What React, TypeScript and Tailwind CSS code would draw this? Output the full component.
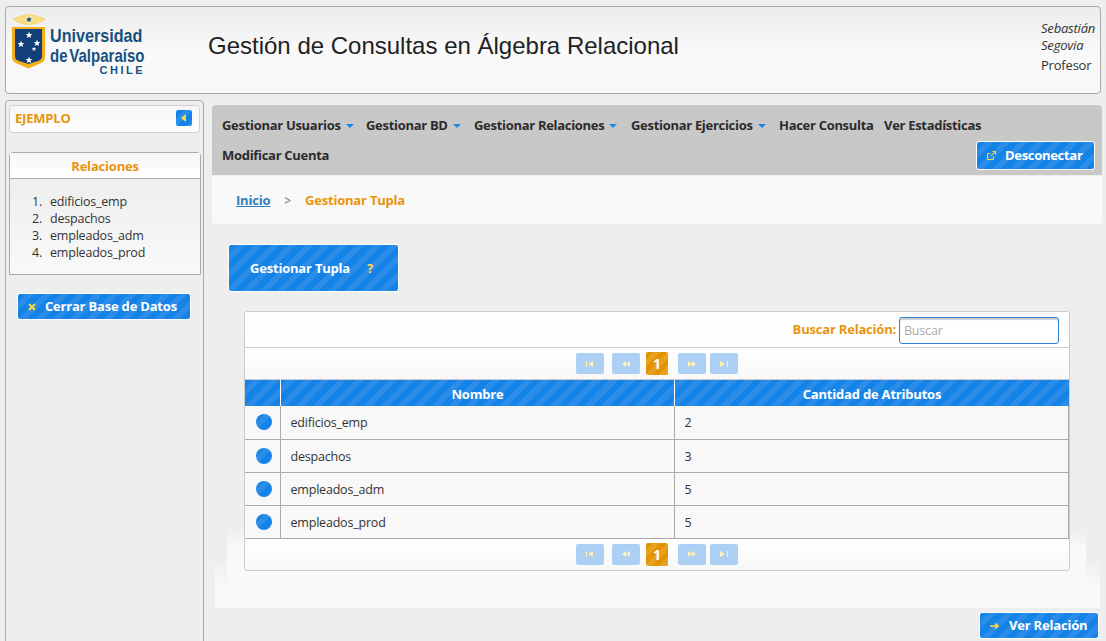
import type { ReactNode } from 'react';

const stripes = 'bg-[repeating-linear-gradient(135deg,#1483e8_0_6px,#2c8de8_6px_12px)]';
const orange = 'text-[#e8940c]';

const relations = [
    { name: 'edificios_emp', attrs: 2 },
    { name: 'despachos', attrs: 3 },
    { name: 'empleados_adm', attrs: 5 },
    { name: 'empleados_prod', attrs: 5 },
];

const Star = ({ x, y, s = 1 }: { x: number; y: number; s?: number }) => (
    <path
        transform={`translate(${x} ${y}) scale(${s})`}
        d="M0-3.4l.9 2.3 2.5.1-1.9 1.6.6 2.4L0 1.7l-2.1 1.3.6-2.4-1.9-1.6 2.5-.1z"
        fill="#ffffff"
    />
);

const Logo = () => (
    <div className="flex items-start">
        <svg width="34" height="56" viewBox="0 0 34 56" className="mt-[7px] shrink-0">
            <path d="M0 5.5 C6 2 11 .5 17 0 C23 .5 28 2 34 5.5 C28 9 23 10.5 17 11 C11 10.5 6 9 0 5.5Z" fill="#f6d774" />
            <g stroke="#fbeebb" strokeWidth=".6">
                <path d="M3 5.5 H11 M6 3 L12 4 M6 8 L12 7 M31 5.5 H23 M28 3 L22 4 M28 8 L22 7" />
            </g>
            <circle cx="17" cy="5.5" r="4.5" fill="#f9e6a4" />
            <path d="M17 2.4l.9 2 2.2.1-1.7 1.4.6 2.2-2-1.2-2 1.2.6-2.2-1.7-1.4 2.2-.1z" fill="#1f4a80" />
            <path d="M0 13 H33 V43 Q33 48 28 49.500 L16.500 54.500 L5 49.500 Q0 48 0 43Z" fill="#f3ae1a" />
            <path d="M3 15 H30 V42 Q30 46 26 47 L16.500 50 L7 47 Q3 46 3 42Z" fill="#123f78" />
            <Star x={17} y={21} />
            <Star x={9} y={30} />
            <Star x={25} y={29} />
            <Star x={22} y={35} s={0.65} />
            <Star x={17} y={46} />
        </svg>
        <div className="ml-[4px] mt-[19px] w-[93px] text-[#17507f] font-['Liberation_Sans',sans-serif] font-bold tracking-normal">
            <div className="text-[19px] leading-[20px] whitespace-nowrap origin-left scale-x-[0.85]">Universidad</div>
            <div className="text-[19px] leading-[20px] whitespace-nowrap origin-left scale-x-[0.79] [word-spacing:-3px]">de Valparaíso</div>
            <div className="text-[11px] leading-[9px] tracking-[2.5px] text-right mr-[-2px]">CHILE</div>
        </div>
    </div>
);

const Header = () => (
    <header className="mx-[5px] mt-[6px] h-[88px] flex border border-[#a9a9a9] rounded-[4px] bg-gradient-to-b from-[#ececec] via-[#f9f9f9] via-50% to-[#f8f8f8] pl-[6px] pr-[18px]">
        <Logo />
        <h1 className="ml-[65px] mt-[24px] text-[24px] leading-[30px] tracking-normal text-[#222] font-['Liberation_Sans',sans-serif]">
            Gestión de Consultas en Álgebra Relacional
        </h1>
        <div className="ml-auto mt-[13px] w-[41px] text-[13px] text-[#333]">
            <div className="italic leading-[17px] whitespace-nowrap">Sebastián</div>
            <div className="italic leading-[17px] whitespace-nowrap">Segovia</div>
            <div className="mt-[3px] leading-[17px] whitespace-nowrap">Profesor</div>
        </div>
    </header>
);

const BlueButton = ({ icon, label, className }: { icon: ReactNode; label: string; className: string }) => (
    <button className={`${stripes} ${className} flex items-center border border-white rounded-[3px] text-white font-bold text-[13px] whitespace-nowrap`}>
        {icon}
        {label}
    </button>
);

const Sidebar = () => (
    <aside className="w-[199px] h-[560px] shrink-0 border border-[#a9a9a9] rounded-t-[4px] bg-[#eeeeee] px-[3px] pt-[4px]">
        <div className="h-[28px] flex items-center justify-between pl-[5px] pr-[7px] border border-[#d2d2d2] rounded-[4px] bg-gradient-to-b from-[#f6f6f6] to-white">
            <span className={`${orange} font-bold text-[13px]`}>EJEMPLO</span>
            <span className={`${stripes} mb-[3px] w-[16px] h-[16px] rounded-[2px] flex items-center justify-center`}>
                <svg width="6" height="8" viewBox="0 0 6 8"><path d="M5 0 V8 L0 4Z" fill="#ffd93b" /></svg>
            </span>
        </div>

        <section className="mt-[19px] w-[192px] border border-[#aaaaaa] rounded-t-[4px]">
            <div className={`${orange} h-[26px] border-b border-[#aaaaaa] bg-gradient-to-b from-[#f6f6f6] to-white text-center font-bold text-[13px] leading-[26px]`}>
                Relaciones
            </div>
            <ol className="h-[95px] pt-[14px] bg-gradient-to-b from-[#eeeeee] to-[#f9f9f9] text-[12.5px] leading-[17px] text-[#333]">
                {relations.map((r, i) => (
                    <li key={r.name} className="flex">
                        <span className="w-[32px] text-right">{i + 1}.</span>
                        <span className="ml-[8px]">{r.name}</span>
                    </li>
                ))}
            </ol>
        </section>

        <BlueButton
            className="mt-[18px] ml-[8px] w-[174px] h-[27px] pl-[10px]"
            icon={
                <svg width="8" height="8" viewBox="0 0 8 8" className="mr-[9px]">
                    <path d="M1 1 L7 7 M7 1 L1 7" stroke="#ffd93b" strokeWidth="2" />
                </svg>
            }
            label="Cerrar Base de Datos"
        />
    </aside>
);

const Caret = () => (
    <svg width="8" height="4" viewBox="0 0 8 4" className="ml-[5px] mt-[1px]"><path d="M0 0 H8 L4 4Z" fill="#1a87e8" /></svg>
);

const MenuItem = ({ label, caret, className }: { label: string; caret?: boolean; className: string }) => (
    <span className={`${className} flex items-center whitespace-nowrap`}>
        {label}
        {caret && <Caret />}
    </span>
);

const Menu = () => (
    <nav className="h-[70px] rounded-t-[4px] bg-[#c8c8c8] pl-[10px] pr-[7px] text-[13px] tracking-[-0.3px] font-bold text-[#2b2b2b]">
        <div className="h-[40px] flex items-center pt-[1px]">
            <MenuItem label="Gestionar Usuarios" caret className="w-[144px]" />
            <MenuItem label="Gestionar BD" caret className="w-[108px]" />
            <MenuItem label="Gestionar Relaciones" caret className="w-[157px]" />
            <MenuItem label="Gestionar Ejercicios" caret className="w-[148px]" />
            <MenuItem label="Hacer Consulta" className="w-[105px]" />
            <MenuItem label="Ver Estadísticas" className="" />
        </div>
        <div className="h-[30px] flex items-start justify-between">
            <MenuItem label="Modificar Cuenta" className="h-[21px]" />
            <BlueButton
                className="mt-[-4px] w-[119px] h-[29px] pl-[10px]"
                icon={
                    <svg width="9" height="9" viewBox="0 0 9 9" className="mr-[9px]" fill="none" stroke="#ffd93b">
                        <path d="M6.500 5.500 V8.500 H.5 V2.500 H3.500 M4 5 L8.500 .5 M5.500 .5 H8.500 V3.500" />
                    </svg>
                }
                label="Desconectar"
            />
        </div>
    </nav>
);

const PagerIcon = ({ d }: { d: string }) => (
    <svg width="10" height="6" viewBox="0 0 10 6"><path d={d} fill="#fdf0b8" /></svg>
);

const Pager = ({ className }: { className: string }) => {
    const btn = 'w-[28px] h-[21px] rounded-[2px] bg-[#abd0f3] flex items-center justify-center';
    return (
        <div className={`${className} flex items-center justify-center bg-gradient-to-b from-white to-[#f8f8f8]`}>
            <span className={btn}><PagerIcon d="M1 0h1v6H1zM8 0v6L3 3z" /></span>
            <span className={`${btn} ml-[8px]`}><PagerIcon d="M5 0v6L1 3zM9 0v6L5 3z" /></span>
            <span className="ml-[6px] w-[22px] h-[23px] rounded-[2px] bg-[repeating-linear-gradient(135deg,#e39300_0_5px,#e8a020_5px_10px)] flex items-center justify-center text-white font-bold text-[14px]">1</span>
            <span className={`${btn} ml-[10px]`}><PagerIcon d="M1 0v6l4-3zM5 0v6l4-3z" /></span>
            <span className={`${btn} ml-[4px]`}><PagerIcon d="M1 0v6l5-3zM8 0h1v6H8z" /></span>
        </div>
    );
};

const RelationsTable = () => (
    <div className="relative ml-[32px] w-[826px] h-[260px] border border-[#cccccc] rounded-[3px] bg-[#f8f8f8]">
        <div className="h-[36px] pt-[1px] flex items-center justify-end pr-[10px] bg-gradient-to-b from-[#fdfdfd] to-white border-b border-[#cccccc]">
            <label className={`${orange} font-bold text-[13px] mr-[3px]`}>Buscar Relación:</label>
            <input
                placeholder="Buscar"
                className="w-[160px] h-[27px] px-[4px] bg-white border border-[#2c83d8] rounded-[3px] shadow-[inset_0_2px_1px_#cccccc] text-[12.5px] placeholder:text-[#aaaaaa] outline-none"
            />
        </div>
        <Pager className="h-[32px] border-b border-[#cccccc]" />
        <table className="w-full table-fixed border-collapse text-[12.5px] text-[#333]">
            <thead>
                <tr className={`${stripes} h-[26px] text-white text-[13px] font-bold`}>
                    <th className="w-[35px] border-r border-white" />
                    <th className="w-[394px] pt-[3px] pl-[1px] border-r border-white">Nombre</th>
                    <th className="pt-[3px] pl-[1px]">Cantidad de Atributos</th>
                </tr>
            </thead>
            <tbody>
                {relations.map(r => (
                    <tr key={r.name} className="h-[33px] border-b border-[#aaaaaa]">
                        <td className="border-r border-[#aaaaaa]">
                            <span className={`${stripes} block w-[16px] h-[16px] rounded-full ml-[11px]`} />
                        </td>
                        <td className="pl-[10px] pt-[3px] border-r border-[#aaaaaa]">{r.name}</td>
                        <td className="pl-[10px] pt-[3px] border-r border-[#aaaaaa]">{r.attrs}</td>
                    </tr>
                ))}
            </tbody>
        </table>
        <Pager className="h-[30px] pt-[1px] rounded-b-[3px]" />
    </div>
);

const Main = () => (
    <main className="relative w-[890px] shrink-0">
        <div className="relative">
            <Menu />
            <div className="mt-[1px] h-[48px] flex items-center pl-[24px] pt-[2px] rounded-b-[4px] bg-[#f9f9f9] text-[13px] font-bold">
                <a className="text-[#2f80b8] underline">Inicio</a>
                <span className="ml-[14px] text-[#666] font-normal text-[12px]">&gt;</span>
                <span className={`${orange} ml-[14px]`}>Gestionar Tupla</span>
            </div>
        </div>

        {/* fondo claro detras de la tabla */}
        <div className="absolute left-[3px] top-[453px] w-[885px] h-[50px] rounded-b-[3px] bg-[#f9f9f9]" />
        <div className="absolute left-[3px] top-[453px] w-[885px] h-[30px] bg-gradient-to-b from-[#eeeeee] to-[#f9f9f9]" />
        <div className="absolute left-[15px] top-[422px] w-[859px] h-[55px] bg-gradient-to-b from-[#eeeeee] via-[#f9f9f9] via-40% to-[#f9f9f9]" />

        <div className="relative">
            <div className={`${stripes} ml-[16px] mt-[20px] mb-[19px] w-[171px] h-[48px] flex items-center pl-[21px] pt-[1px] border border-white rounded-[3px] text-white font-bold text-[13px]`}>
                Gestionar Tupla
                <span className="ml-[17px] text-[#ffd93b]">?</span>
            </div>
            <RelationsTable />
            <div className="mt-[41px] flex justify-end pr-[3px]">
                <BlueButton
                    className="w-[120px] h-[27px] pl-[10px]"
                    icon={
                        <svg width="9" height="8" viewBox="0 0 9 8" className="mr-[10px]" fill="none" stroke="#ffd93b" strokeWidth="1.5">
                            <path d="M0 4 H7 M5 1.500 L8 4 L5 6.500" />
                        </svg>
                    }
                    label="Ver Relación"
                />
            </div>
        </div>
    </main>
);

export default function App() {
    return (
        <div className="h-[641px] w-[1106px] overflow-hidden bg-[#eeeeee] font-['Open_Sans',sans-serif] tracking-[-0.2px]">
            <Header />
            <div className="mt-[6px] ml-[5px] flex gap-[8px] items-start">
                <Sidebar />
                <div className="pt-[5px]">
                    <Main />
                </div>
            </div>
        </div>
    );
}
